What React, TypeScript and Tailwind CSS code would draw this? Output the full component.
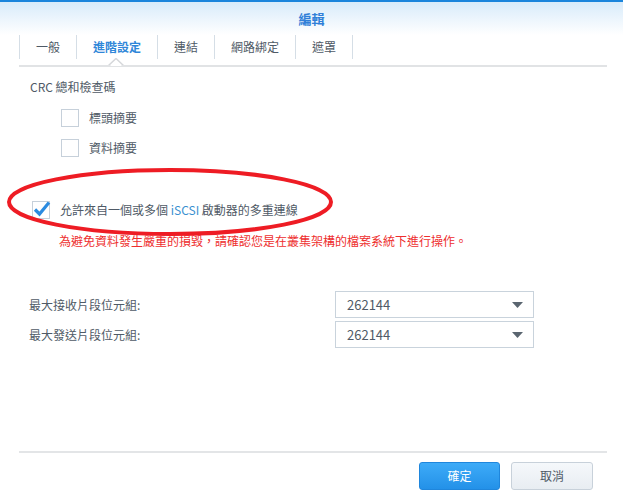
const font = { fontFamily: '"Noto Sans CJK TC", "Liberation Sans", sans-serif' };

const tabs = ['一般', '進階設定', '連結', '網路綁定', '遮罩'];

function Box({ checked }: { checked?: boolean }) {
    return (
        <div className="relative w-[18px] h-[18px] border border-[#c6d0da] bg-white shrink-0">
            {checked && (
                <svg className="absolute -left-[1px] -top-[3px]" width="20" height="20" viewBox="0 0 20 20">
                    <path d="M3 10.5 L7.5 15 L17 3.5" fill="none" stroke="#2b8be0" strokeWidth="3.2" />
                </svg>
            )}
        </div>
    );
}

function Select({ value }: { value: string }) {
    return (
        <div className="w-[199px] h-[27px] border border-[#c9d3dc] bg-white flex items-center justify-between pl-[11px] pr-[10px] text-[13px] text-[#4f5a66]">
            <span>{value}</span>
            <svg width="11" height="6" viewBox="0 0 11 6">
                <path d="M0 0 H11 L5.5 6 Z" fill="#5a6570" />
            </svg>
        </div>
    );
}

export default function App() {
    return (
        <div className="w-[623px] h-[498px] bg-white flex flex-col text-[#4f5a66] relative overflow-hidden" style={font}>
            <div className="h-[2px] bg-[#1b85dc]" />
            <div className="h-[33px] bg-gradient-to-b from-[#d8ebfa] to-white flex items-center justify-center">
                <span className="text-[13px] font-bold text-[#2f7fd8]">編輯</span>
            </div>

            {/* tab strip */}
            <div className="mx-[19px] w-[588px] relative border-b-2 border-[#e1e3e5]">
                <div className="flex h-[30px] pb-[6px]">
                    {tabs.map((t, i) => (
                        <div
                            key={t}
                            className={
                                'flex items-center px-[16px] border-l border-[#d5dee6] text-[12px] ' +
                                (i === 4 ? 'border-r ' : '') +
                                (i === 1 ? 'text-[#2f86d8] font-bold' : 'text-[#4f5a66]')
                            }
                        >
                            {t}
                        </div>
                    ))}
                </div>
                <svg className="absolute left-[89px] -bottom-[2px]" width="16" height="9" viewBox="0 0 16 9">
                    <path d="M0 8 L8 0.5 L16 8" fill="white" stroke="#d5d7da" strokeWidth="1.5" />
                    <rect x="0" y="7" width="16" height="2" fill="#e1e3e5" />
                    <path d="M2 8 L8 2.5 L14 8 Z" fill="white" />
                </svg>
            </div>

            <div className="flex flex-col pl-[30px] text-[12px]">
                <div className="mt-[11px] h-[18px] flex items-center">CRC 總和檢查碼</div>
                <div className="ml-[31px] mt-[13px] flex items-center gap-[10px] h-[18px]">
                    <Box />
                    <span>標頭摘要</span>
                </div>
                <div className="ml-[31px] mt-[12px] flex items-center gap-[10px] h-[18px]">
                    <Box />
                    <span>資料摘要</span>
                </div>
                <div className="ml-[2px] mt-[44px] flex items-center gap-[10px] h-[18px]">
                    <Box checked />
                    <span>
                        允許來自一個或多個 <span className="text-[#3a8fd0]">iSCSI</span> 啟動器的多重連線
                    </span>
                </div>
                <div className="ml-[29px] mt-[13px] h-[18px] flex items-center text-[#ee2e2e]">
                    為避免資料發生嚴重的損毀，請確認您是在叢集架構的檔案系統下進行操作。
                </div>
            </div>

            <div className="flex flex-col gap-[3px] mt-[41px]">
                <div className="flex items-center pl-[29px]">
                    <span className="w-[306px] text-[12px]">最大接收片段位元組:</span>
                    <Select value="262144" />
                </div>
                <div className="flex items-center pl-[29px]">
                    <span className="w-[306px] text-[12px]">最大發送片段位元組:</span>
                    <Select value="262144" />
                </div>
            </div>

            <div className="mt-auto mx-[19px] w-[588px] border-t-2 border-[#e3e5e7] flex justify-end gap-[11px] pt-[9px] pb-[8px] pr-[14px]">
                <button className="w-[81px] h-[28px] rounded-[3px] border border-[#1f86dc] bg-gradient-to-b from-[#3dabf8] to-[#2391e8] text-white text-[12px]">
                    確定
                </button>
                <button className="w-[82px] h-[28px] rounded-[3px] border border-[#c8d1da] bg-gradient-to-b from-[#f5f8fb] to-[#e8edf2] text-[#4f5a66] text-[12px]">
                    取消
                </button>
            </div>

            {/* hand-drawn red circle */}
            <svg className="absolute left-0 top-0 pointer-events-none" width="623" height="498" viewBox="0 0 623 498">
                <ellipse cx="170" cy="202" rx="161" ry="32" fill="none" stroke="#ee1c24" strokeWidth="4" />
            </svg>
        </div>
    );
}
